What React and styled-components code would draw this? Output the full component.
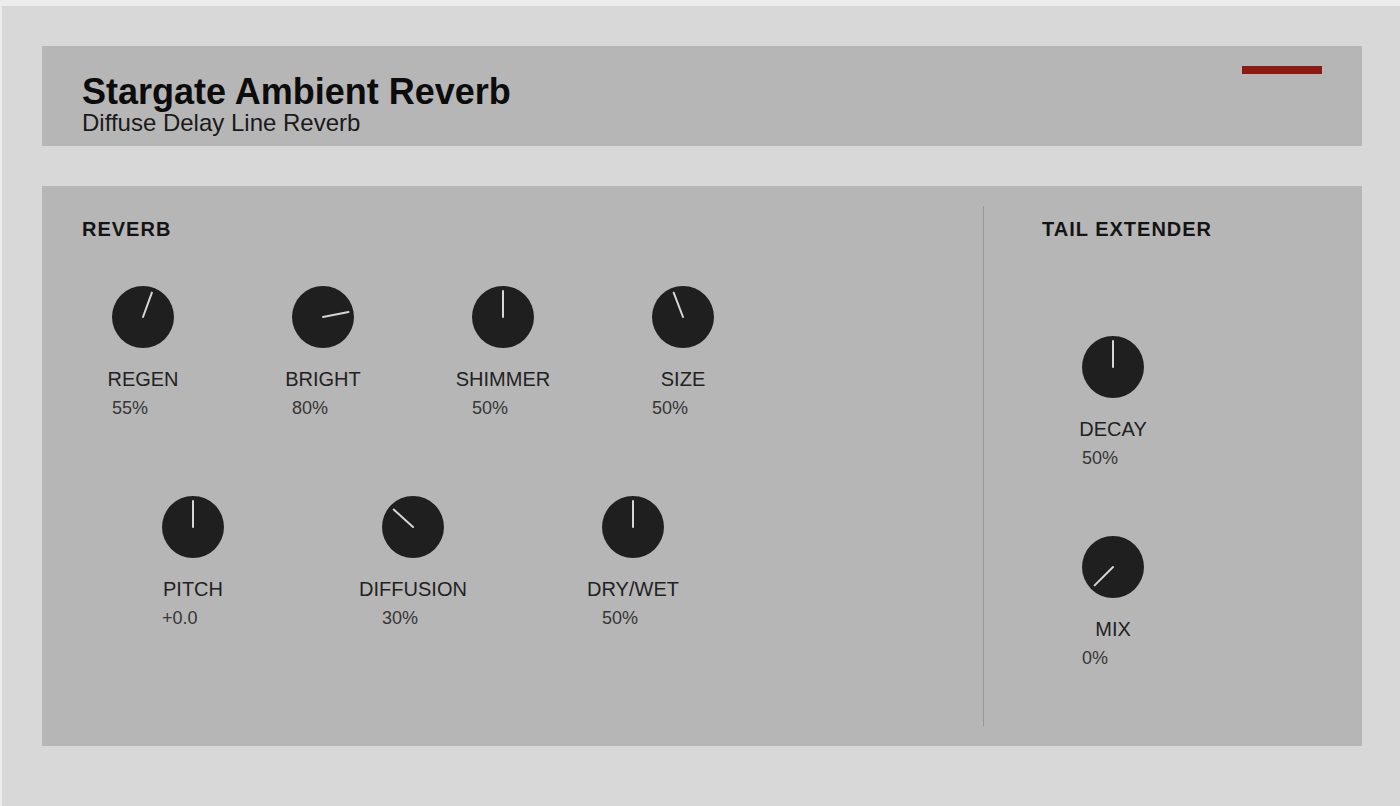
import React from 'react';
import styled, { createGlobalStyle } from 'styled-components';

const GlobalStyle = createGlobalStyle`
  html, body {
    margin: 0;
    padding: 0;
    background: #ececec;
    font-family: "Liberation Sans", Arial, sans-serif;
  }
`;

const Window = styled.div`
  box-sizing: border-box;
  margin: 6px 0 0 2px;
  width: 1398px;
  height: 800px;
  padding: 40px 38px 60px 40px;
  background: #d8d8d8;
  display: flex;
  flex-direction: column;
  gap: 40px;
`;

const Header = styled.header`
  box-sizing: border-box;
  height: 100px;
  background: #b6b6b6;
  padding: 20px 40px 0 40px;
  display: flex;
  justify-content: space-between;
  align-items: flex-start;
`;

const Titles = styled.div`
  margin-top: 7px;
  display: flex;
  flex-direction: column;
`;

const Title = styled.h1`
  margin: 0;
  font-size: 36px;
  line-height: 38px;
  font-weight: 700;
  color: #0c0c0c;
`;

const Subtitle = styled.div`
  font-size: 24px;
  line-height: 24px;
  color: #1a1a1a;
`;

const RedBar = styled.div`
  width: 80px;
  height: 8px;
  background: #8c1a13;
`;

const Panel = styled.main`
  box-sizing: border-box;
  height: 560px;
  background: #b6b6b6;
  padding: 20px 0;
  display: flex;
`;

const Section = styled.section`
  box-sizing: border-box;
  width: ${p => p.$width || 'auto'};
  flex: ${p => (p.$width ? 'none' : 1)};
  padding: 11px 0 0 ${p => p.$indent}px;
  display: flex;
  flex-direction: column;
`;

const Divider = styled.div`
  width: 1px;
  background: #979797;
`;

const Heading = styled.h2`
  margin: 0 0 ${p => p.$below}px 0;
  font-size: 20px;
  line-height: 24px;
  font-weight: 700;
  letter-spacing: 1px;
  color: #141414;
`;

const KnobRow = styled.div`
  display: flex;
  gap: ${p => p.$gap}px;
  padding-left: ${p => p.$offset}px;
  margin-bottom: ${p => p.$below || 0}px;
`;

const KnobCell = styled.div`
  width: 62px;
  display: flex;
  flex-direction: column;
  align-items: center;
`;

const KnobLabel = styled.div`
  margin-top: 19px;
  font-size: 20px;
  line-height: 24px;
  white-space: nowrap;
  color: #222;
`;

const KnobValue = styled.div`
  align-self: flex-start;
  margin-top: 7px;
  font-size: 18px;
  line-height: 20px;
  white-space: nowrap;
  color: #363636;
`;

const Dial = ({ angle }) => (
  <svg width="62" height="62" viewBox="0 0 62 62">
    <circle cx="31" cy="31" r="31" fill="#1f1f1f" />
    <line
      x1="31" y1="31" x2="31" y2="5"
      stroke="#d6d6d6" strokeWidth="2" strokeLinecap="round"
      transform={`rotate(${angle} 31 31)`}
    />
  </svg>
);

const Knob = ({ label, value, angle }) => (
  <KnobCell>
    <Dial angle={angle} />
    <KnobLabel>{label}</KnobLabel>
    <KnobValue>{value}</KnobValue>
  </KnobCell>
);

const reverbTop = [
  { label: 'REGEN', value: '55%', angle: 20 },
  { label: 'BRIGHT', value: '80%', angle: 79 },
  { label: 'SHIMMER', value: '50%', angle: 0 },
  { label: 'SIZE', value: '50%', angle: -21 },
];

const reverbBottom = [
  { label: 'PITCH', value: '+0.0', angle: 0 },
  { label: 'DIFFUSION', value: '30%', angle: -48 },
  { label: 'DRY/WET', value: '50%', angle: 0 },
];

const App = () => (
  <>
    <GlobalStyle />
    <Window>
      <Header>
        <Titles>
          <Title>Stargate Ambient Reverb</Title>
          <Subtitle>Diffuse Delay Line Reverb</Subtitle>
        </Titles>
        <RedBar />
      </Header>
      <Panel>
        <Section $width="941px" $indent={40}>
          <Heading $below={45}>REVERB</Heading>
          <KnobRow $gap={118} $offset={30} $below={78}>
            {reverbTop.map(k => <Knob key={k.label} {...k} />)}
          </KnobRow>
          <KnobRow $gap={158} $offset={80}>
            {reverbBottom.map(k => <Knob key={k.label} {...k} />)}
          </KnobRow>
        </Section>
        <Divider />
        <Section $indent={58}>
          <Heading $below={95}>TAIL EXTENDER</Heading>
          <KnobRow $gap={0} $offset={40} $below={68}>
            <Knob label="DECAY" value="50%" angle={0} />
          </KnobRow>
          <KnobRow $gap={0} $offset={40}>
            <Knob label="MIX" value="0%" angle={-135} />
          </KnobRow>
        </Section>
      </Panel>
    </Window>
  </>
);

export default App;
